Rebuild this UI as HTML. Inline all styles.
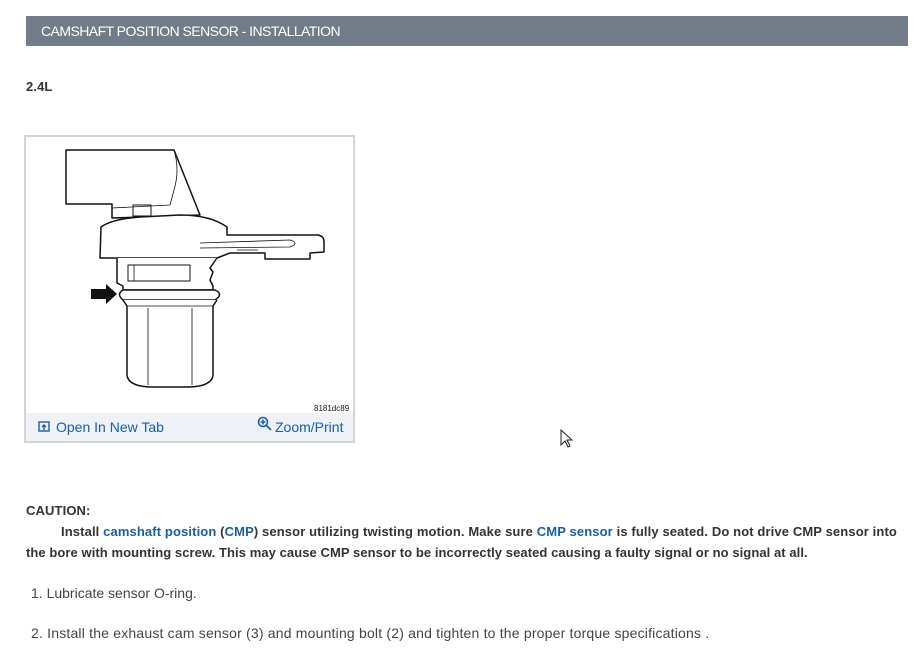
<!DOCTYPE html>
<html><head><meta charset="utf-8"><style>
body{margin:0;width:922px;height:662px;background:#fff;font-family:"Liberation Sans",sans-serif;color:#333;position:relative;overflow:hidden}
.a{position:absolute;white-space:nowrap}
.hdr{left:26px;top:16px;width:882px;height:30px;background:#717c88;color:#fff;font-size:14px;line-height:30px;padding-left:15px;box-sizing:border-box;letter-spacing:-0.55px}
.b{font-weight:bold;font-size:13px;letter-spacing:0.12px}
.blue{color:#1a5ea8}
.box{left:24px;top:135px;width:331px;height:308px;border:2px solid #d4d4d4;box-sizing:border-box}
.foot{left:26px;top:413px;width:327px;height:28px;background:#eef2f7}
.lnk{color:#1a5ea8;font-size:14px;top:419px}
.li{font-size:14px;color:#444}
</style></head><body>
<div class="a hdr">CAMSHAFT POSITION SENSOR - INSTALLATION</div>
<div class="a b" style="left:26px;top:79px">2.4L</div>
<div class="a box"></div>
<div class="a foot"></div>
<svg class="a" style="left:0;top:0" width="400" height="420" fill="none" stroke="#111" stroke-width="1.5" stroke-linejoin="round">
<path d="M66 150 L174 150 L200 215 L172 216 L112 218 L112 204 L66 204 Z" fill="#fff"/>
<path d="M174 150 Q180 170 174 190 L170 205 M112 208 L170 205" stroke-width="0.8"/>
<rect x="133" y="205" width="18" height="11" stroke-width="1"/>
<path d="M101 227 Q112 219 140 217 L180 215 Q210 215 227 227 L227 235 L318 235 Q324 236 324 242 L324 252 L310 253 L310 259 L265 259 L265 253 L230 253 L217 258 L100 258 Z" fill="#fff"/>
<path d="M200 243 L290 240 Q300 243 290 247 L200 248 M237 250 L258 250" stroke-width="0.8"/>
<path d="M117 258 L117 283 L123 286 L123 290 L213 290 L213 286 L210 280 L213 272 L210 268 L217 258" fill="#fff"/>
<rect x="128" y="265" width="62" height="16" stroke-width="1"/>
<line x1="134" y1="265" x2="134" y2="281" stroke-width="0.8"/>
<path d="M123 290 Q116 294 123 300 L215 300 Q224 294 215 290 Z" fill="#fff"/>
<path d="M123 300 L127 306 L127 375 Q128 386 150 387 L190 387 Q212 386 213 375 L213 306 L217 300" fill="#fff"/>
<path d="M127 306 L213 306 M148 308 L148 385 M192 308 L192 385" stroke-width="0.8"/>
<path d="M91 289 L106 289 L106 284 L117 294 L106 304 L106 299 L91 299 Z" fill="#111" stroke="none"/>
</svg>
<div class="a" style="left:314px;top:404px;font-size:8px;color:#111">8181dc89</div>
<svg class="a" style="left:38px;top:421px" width="12" height="12" fill="none" stroke="#1a5ea8" stroke-width="1.4"><rect x="1" y="1" width="10" height="9"/><path d="M6 9 V4 M4 6 L6 4 L8 6"/></svg>
<div class="a lnk" style="left:56px">Open In New Tab</div>
<svg class="a" style="left:257px;top:416px" width="15" height="15" fill="none" stroke="#1a5ea8" stroke-width="1.6"><circle cx="6" cy="6" r="4.5"/><path d="M9.5 9.5 L14 14 M6 3.5 V8.5 M3.5 6 H8.5" /></svg>
<div class="a lnk" style="left:275px">Zoom/Print</div>
<svg class="a" style="left:560px;top:429px" width="14" height="20"><path d="M1 1 L1 16 L5 12 L8 18 L10 17 L7 11 L12 11 Z" fill="#fff" stroke="#222" stroke-width="1"/></svg>
<div class="a b" style="left:26px;top:503px">CAUTION:</div>
<div class="a b" style="left:61px;top:524px">Install <span class="blue">camshaft position</span> (<span class="blue">CMP</span>) sensor utilizing twisting motion. Make sure <span class="blue">CMP sensor</span> is fully seated. Do not drive CMP sensor into</div>
<div class="a b" style="left:26px;top:545px;letter-spacing:0.07px">the bore with mounting screw. This may cause CMP sensor to be incorrectly seated causing a faulty signal or no signal at all.</div>
<div class="a li" style="left:31px;top:585px">1. Lubricate sensor O-ring.</div>
<div class="a li" style="left:31px;top:625px;letter-spacing:0.19px">2. Install the exhaust cam sensor (3) and mounting bolt (2) and tighten to the proper torque specifications .</div>
</body></html>
